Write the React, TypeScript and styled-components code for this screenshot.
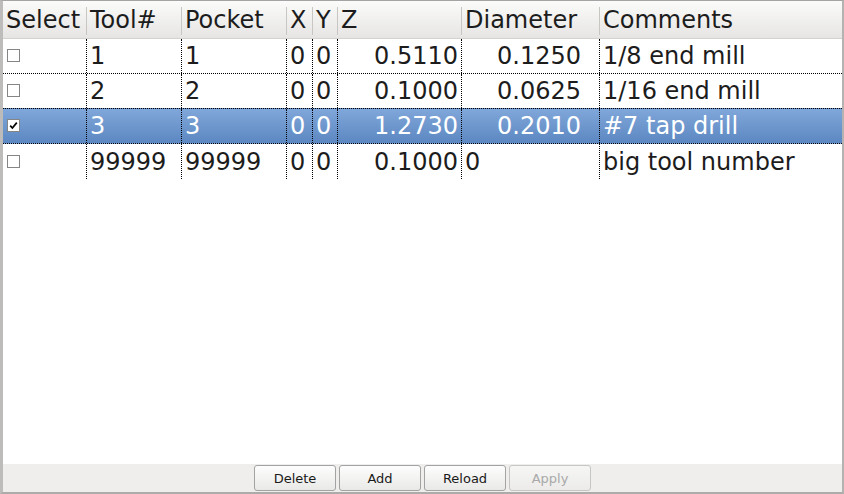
import React from 'react';
import styled, { createGlobalStyle } from 'styled-components';

const GlobalStyle = createGlobalStyle`
  html, body {
    margin: 0;
    padding: 0;
    background: #ffffff;
  }
  body {
    font-family: 'DejaVu Sans', 'Liberation Sans', sans-serif;
  }
`;

const TEMPLATE = '84px 95px 105px 26px 25px 124px 138px 1fr';

type Align = 'left' | 'right';

interface Column {
  label: string;
  align: Align;
  padRight?: number;
}

const columns: Column[] = [
  { label: 'Select', align: 'left' },
  { label: 'Tool#', align: 'left' },
  { label: 'Pocket', align: 'left' },
  { label: 'X', align: 'left' },
  { label: 'Y', align: 'left' },
  { label: 'Z', align: 'right' },
  { label: 'Diameter', align: 'right', padRight: 18 },
  { label: 'Comments', align: 'left' },
];

interface Tool {
  checked: boolean;
  tool: string;
  pocket: string;
  x: string;
  y: string;
  z: string;
  diameter: string;
  diameterLeft?: boolean;
  comment: string;
}

const tools: Tool[] = [
  { checked: false, tool: '1', pocket: '1', x: '0', y: '0', z: '0.5110', diameter: '0.1250', comment: '1/8 end mill' },
  { checked: false, tool: '2', pocket: '2', x: '0', y: '0', z: '0.1000', diameter: '0.0625', comment: '1/16 end mill' },
  { checked: true, tool: '3', pocket: '3', x: '0', y: '0', z: '1.2730', diameter: '0.2010', comment: '#7 tap drill' },
  { checked: false, tool: '99999', pocket: '99999', x: '0', y: '0', z: '0.1000', diameter: '0', diameterLeft: true, comment: 'big tool number' },
];

function CheckBox({ checked }: { checked: boolean }) {
  return (
    <Box>
      {checked && (
        <svg width="11" height="11" viewBox="0 0 11 11">
          <path d="M2.2 5.6 L4.4 8 L8.8 2.6" fill="none" stroke="#000" strokeWidth="1.7" />
        </svg>
      )}
    </Box>
  );
}

function App() {
  return (
    <>
      <GlobalStyle />
      <Frame>
        <TableArea>
          <HeaderRow>
            {columns.map((col, i) => (
              <HeaderCell key={col.label} $last={i === columns.length - 1}>
                {col.label}
              </HeaderCell>
            ))}
          </HeaderRow>
          {tools.map((t, idx) => (
            <Row key={t.tool} $selected={t.checked} $last={idx === tools.length - 1}>
              <Cell $align="left">
                <CheckBox checked={t.checked} />
              </Cell>
              <Cell $align="left">{t.tool}</Cell>
              <Cell $align="left">{t.pocket}</Cell>
              <Cell $align="left">{t.x}</Cell>
              <Cell $align="left">{t.y}</Cell>
              <Cell $align="right">{t.z}</Cell>
              <Cell $align={t.diameterLeft ? 'left' : 'right'} $padRight={t.diameterLeft ? 3 : 18}>
                {t.diameter}
              </Cell>
              <Cell $align="left" $last>
                {t.comment}
              </Cell>
            </Row>
          ))}
        </TableArea>
        <ButtonBar>
          <Button>Delete</Button>
          <Button>Add</Button>
          <Button>Reload</Button>
          <Button disabled>Apply</Button>
        </ButtonBar>
      </Frame>
    </>
  );
}
export default App;

const Frame = styled.div`
  box-sizing: border-box;
  width: 844px;
  height: 494px;
  display: flex;
  flex-direction: column;
  border-top: 1px solid #a4a4a4;
  border-left: 3px solid #bdbcba;
  border-right: 2px solid #b4b3b1;
  border-bottom: 2px solid #acaba9;
  background: #ffffff;
  overflow: hidden;
`;

const TableArea = styled.div`
  flex: 1;
  background: #ffffff;
  color: #1c1c1c;
  font-size: 24px;
`;

const HeaderRow = styled.div`
  display: grid;
  grid-template-columns: ${TEMPLATE};
  height: 38px;
  box-sizing: border-box;
  border-bottom: 1px solid #d3d2cf;
  background: linear-gradient(#fbfbfa, #e6e5e3);
`;

const HeaderCell = styled.div<{ $last?: boolean }>`
  position: relative;
  display: flex;
  align-items: center;
  padding: 0 3px;
  white-space: nowrap;
  &::after {
    content: '';
    display: ${(p) => (p.$last ? 'none' : 'block')};
    position: absolute;
    right: 0;
    top: 6px;
    bottom: 3px;
    width: 1px;
    background: #c8c6c3;
  }
`;

const Row = styled.div<{ $selected?: boolean; $last?: boolean }>`
  display: grid;
  grid-template-columns: ${TEMPLATE};
  box-sizing: border-box;
  height: ${(p) => (p.$selected ? 36 : 35)}px;
  margin-top: ${(p) => (p.$selected ? -1 : 0)}px;
  border-top: ${(p) => (p.$selected ? '1px dotted #000' : 'none')};
  border-bottom: ${(p) => (p.$last ? 'none' : '1px dotted #000')};
  background: ${(p) => (p.$selected ? 'linear-gradient(#80a7da, #5c87c1)' : 'transparent')};
  color: ${(p) => (p.$selected ? '#ffffff' : '#1c1c1c')};
`;

const Cell = styled.div<{ $align: Align; $last?: boolean; $padRight?: number }>`
  display: flex;
  align-items: center;
  justify-content: ${(p) => (p.$align === 'right' ? 'flex-end' : 'flex-start')};
  padding: 0 ${(p) => p.$padRight ?? 3}px 0 3px;
  border-right: ${(p) => (p.$last ? 'none' : '1px dotted #000')};
  white-space: nowrap;
  overflow: hidden;
`;

const Box = styled.span`
  box-sizing: border-box;
  width: 13px;
  height: 13px;
  margin-left: 1px;
  margin-top: -1px;
  border: 1px solid #858585;
  background: #ffffff;
  display: flex;
  align-items: center;
  justify-content: center;
`;

const ButtonBar = styled.div`
  height: 28px;
  display: flex;
  align-items: center;
  justify-content: center;
  gap: 3px;
  background: #efeeec;
`;

const Button = styled.button`
  box-sizing: border-box;
  width: 82px;
  height: 26px;
  padding: 0;
  border: 1px solid #a3a3a3;
  border-radius: 3px;
  background: linear-gradient(#fdfdfd, #e9e9e7);
  font-family: 'DejaVu Sans', 'Liberation Sans', sans-serif;
  font-size: 13px;
  color: #1a1a1a;
  &:disabled {
    color: #a9a9a9;
    border-color: #c6c6c6;
    background: linear-gradient(#f6f6f5, #ecebe9);
  }
`;
